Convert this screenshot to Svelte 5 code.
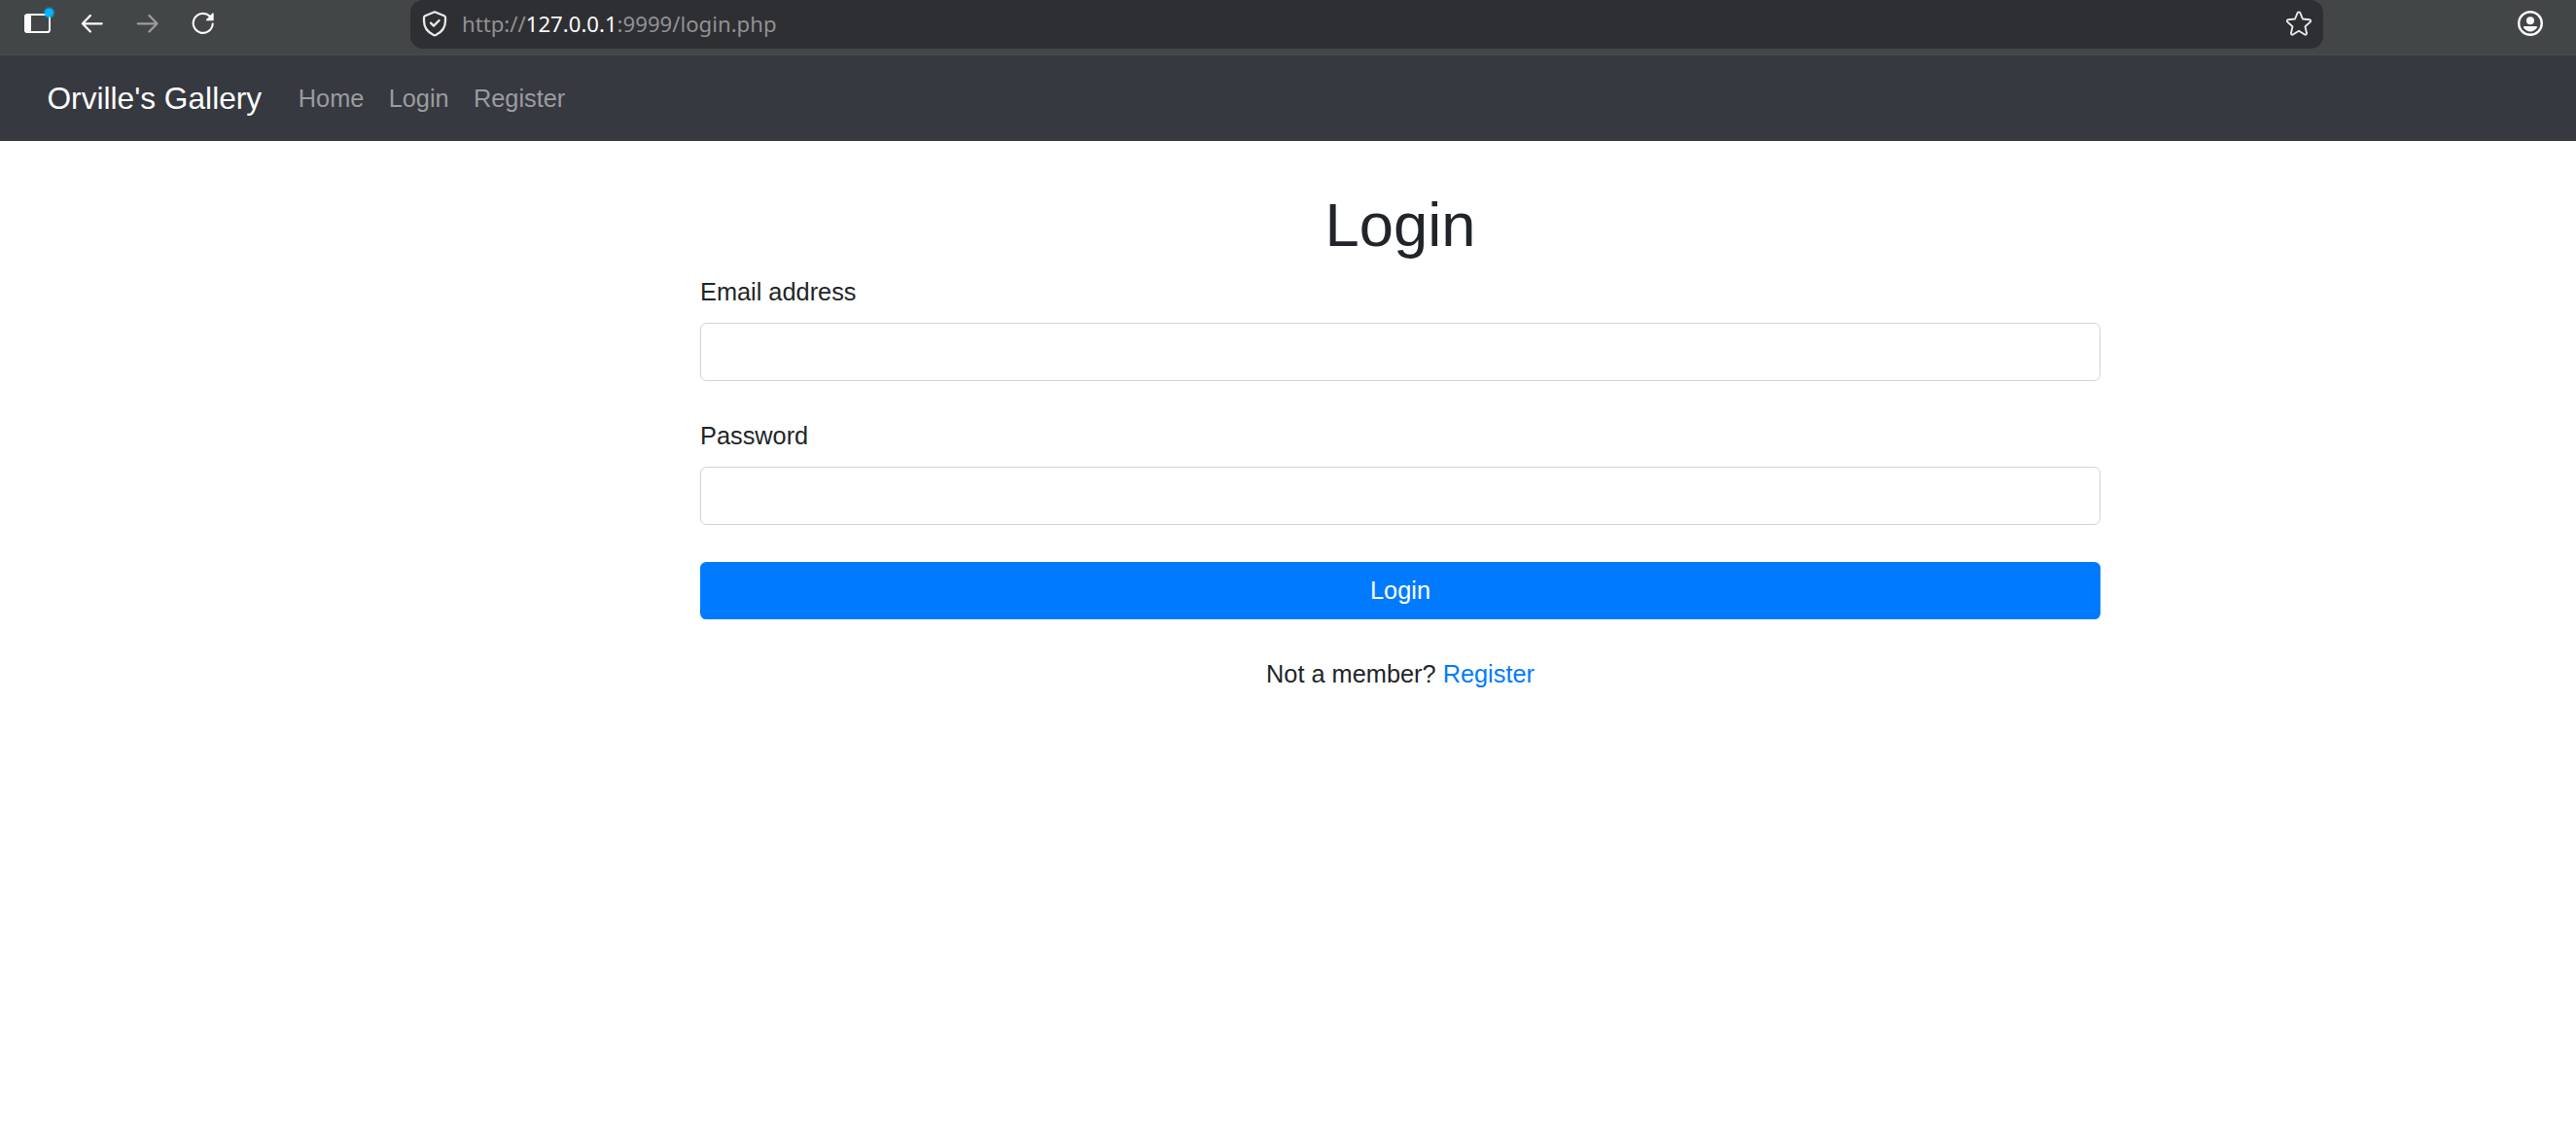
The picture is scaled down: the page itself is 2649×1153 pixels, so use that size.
<script>
  const links = ['Home', 'Login', 'Register'];
  const fields = [
    { id: 'email', label: 'Email address', type: 'email' },
    { id: 'password', label: 'Password', type: 'password' }
  ];
</script>

<div class="toolbar">
  <div class="controls">
    <svg class="panel" width="34" height="36" viewBox="0 0 34 36">
      <rect x="1" y="11" width="25" height="18" rx="2.600" fill="none" stroke="#fbfbfe" stroke-width="2" />
      <path d="M2.600 10.500h4.400v19H2.600A2.600 2.600 0 0 1 0 27V13a2.600 2.600 0 0 1 2.600-2.500z" fill="#fbfbfe" />
      <circle cx="25.500" cy="9" r="6" fill="#00b3f4" opacity="0.35" />
      <circle cx="25.500" cy="9" r="4.500" fill="#00b3ff" />
    </svg>
    <svg class="arrow" width="24" height="24" viewBox="0 0 24 24">
      <path d="M21.700 12.300H2.400M9.900 4 1.900 12.300l8 8.200" />
    </svg>
    <svg class="arrow dim" width="24" height="24" viewBox="0 0 24 24">
      <path d="M1.700 12.300H21M13.500 4l8 8.300-8 8.200" />
    </svg>
    <svg class="reload" width="24" height="24" viewBox="0 0 24 24">
      <path d="M18.600 4.600A10 10 0 1 0 21.700 12.600" fill="none" stroke="#fbfbfe" stroke-width="2.100" stroke-linecap="round" />
      <path d="M22.700 1.900v6.700a.7.7 0 0 1-.7.7h-6.400c-.7 0-1-.8-.5-1.300l6.400-6.600c.5-.5 1.200-.2 1.200.5z" fill="#fbfbfe" />
    </svg>
  </div>
  <div class="address">
    <svg width="26" height="28" viewBox="0 0 26 28">
      <path d="M13 2.200 22.800 6.200Q24 6.800 24 8v3.500c0 6.500-3.600 11.500-9.800 14.500a2.500 2.500 0 0 1-2.400 0C5.600 23 2 18 2 11.500V8q0-1.200 1.200-1.800z" />
      <path d="m9 13.600 3 3 5.600-5.600" />
    </svg>
    <span class="url">http://<b>127.0.0.1</b>:9999/login.php</span>
    <svg class="star" width="28" height="28" viewBox="0 0 28 28">
      <path d="M12.700 3.200a1.450 1.450 0 0 1 2.600 0l2.700 6.300 7 .8a1.300 1.300 0 0 1 .7 2.300l-5.200 4.600 1.500 6.900a1.300 1.300 0 0 1-2 1.400L14 21.800l-6 3.700a1.300 1.300 0 0 1-2-1.400l1.500-6.900-5.200-4.600a1.300 1.300 0 0 1 .7-2.300l7-.8z" />
    </svg>
  </div>
  <svg class="account" width="26" height="26" viewBox="0 0 26 26">
    <circle cx="13" cy="13" r="11.800" fill="none" stroke="#fbfbfe" stroke-width="2.400" />
    <circle cx="13" cy="10.300" r="4" fill="#fbfbfe" />
    <path d="M7 16h12c1 0 1.400.8.900 1.600C18.400 20 16 21.500 13 21.500S7.600 20 6.100 17.600C5.600 16.800 6 16 7 16z" fill="#fbfbfe" />
  </svg>
</div>

<nav>
  <a class="brand" href="#top">Orville's Gallery</a>
  {#each links as link}
    <a class="link" href="#{link}">{link}</a>
  {/each}
</nav>

<main>
  <h1>Login</h1>
  <form>
    {#each fields as field}
      <div class="group">
        <label for={field.id}>{field.label}</label>
        <input id={field.id} type={field.type} />
      </div>
    {/each}
    <button type="button">Login</button>
    <p>Not a member? <a href="#register">Register</a></p>
  </form>
</main>

<style>
  :global(body) {
    background: #fff;
    color: #212529;
    font-family: 'Liberation Sans', Arial, sans-serif;
    font-size: 25.33px;
    line-height: 1.5;
  }
  a {
    text-decoration: none;
  }
  svg {
    display: block;
    flex: none;
  }
  .toolbar {
    display: flex;
    align-items: flex-start;
    box-sizing: border-box;
    height: 57px;
    background: #424647;
    border-bottom: 1px solid #4a4b4c;
  }
  .controls {
    display: flex;
    align-items: flex-start;
    box-sizing: border-box;
    flex: none;
    width: 422px;
    padding: 12px 0 0 25px;
  }
  .panel {
    margin: -8px 24px 0 0;
  }
  .arrow {
    margin-right: 33px;
    fill: none;
    stroke: #fbfbfe;
    stroke-width: 2.3;
    stroke-linecap: round;
    stroke-linejoin: round;
  }
  .dim {
    opacity: 0.48;
  }
  .address {
    display: flex;
    align-items: center;
    box-sizing: border-box;
    flex: none;
    width: 1967px;
    height: 50px;
    padding: 0 11px 0 12px;
    border-radius: 13px;
    background: #2e2f33;
  }
  .address svg {
    margin-top: -2px;
    fill: none;
    stroke: #e9e9eb;
    stroke-width: 2.3;
    stroke-linecap: round;
    stroke-linejoin: round;
  }
  .url {
    flex: 1;
    margin-left: 15px;
    color: #919193;
    font-family: 'Noto Sans', sans-serif;
    font-size: 22.17px;
    line-height: 48px;
    height: 50px;
  }
  .url b {
    color: #fbfbfe;
    font-weight: 400;
  }
  .address .star {
    stroke-width: 1.9;
  }
  .account {
    margin: 11px 34px 0 auto;
  }
  nav {
    display: flex;
    align-items: center;
    box-sizing: border-box;
    height: 88px;
    padding: 2px 0 0 48.5px;
    background: #363940;
  }
  .brand {
    margin-right: 25px;
    color: #fff;
    font-size: 31.67px;
  }
  .link {
    padding: 0 12.67px;
    color: #9a9c9f;
  }
  main {
    width: 1440px;
    margin-left: 720px;
    padding-top: 48px;
  }
  h1 {
    margin: 0 0 13px;
    font-size: 63.33px;
    font-weight: 400;
    line-height: 76px;
    text-align: center;
  }
  .group {
    margin-bottom: 38px;
  }
  label {
    display: block;
    height: 36px;
    margin-bottom: 14px;
    line-height: 36px;
  }
  input {
    display: block;
    box-sizing: border-box;
    width: 100%;
    height: 60px;
    border: 1px solid #ced4da;
    border-radius: 6.3px;
    background: #fff;
  }
  button {
    display: block;
    width: 100%;
    height: 59px;
    padding: 0;
    border: 0;
    border-radius: 6.3px;
    background: #007bff;
    color: #fff;
    font: inherit;
  }
  p {
    margin: 37px 0 0;
    line-height: 38px;
    text-align: center;
  }
  p a {
    color: #007bff;
  }
</style>
